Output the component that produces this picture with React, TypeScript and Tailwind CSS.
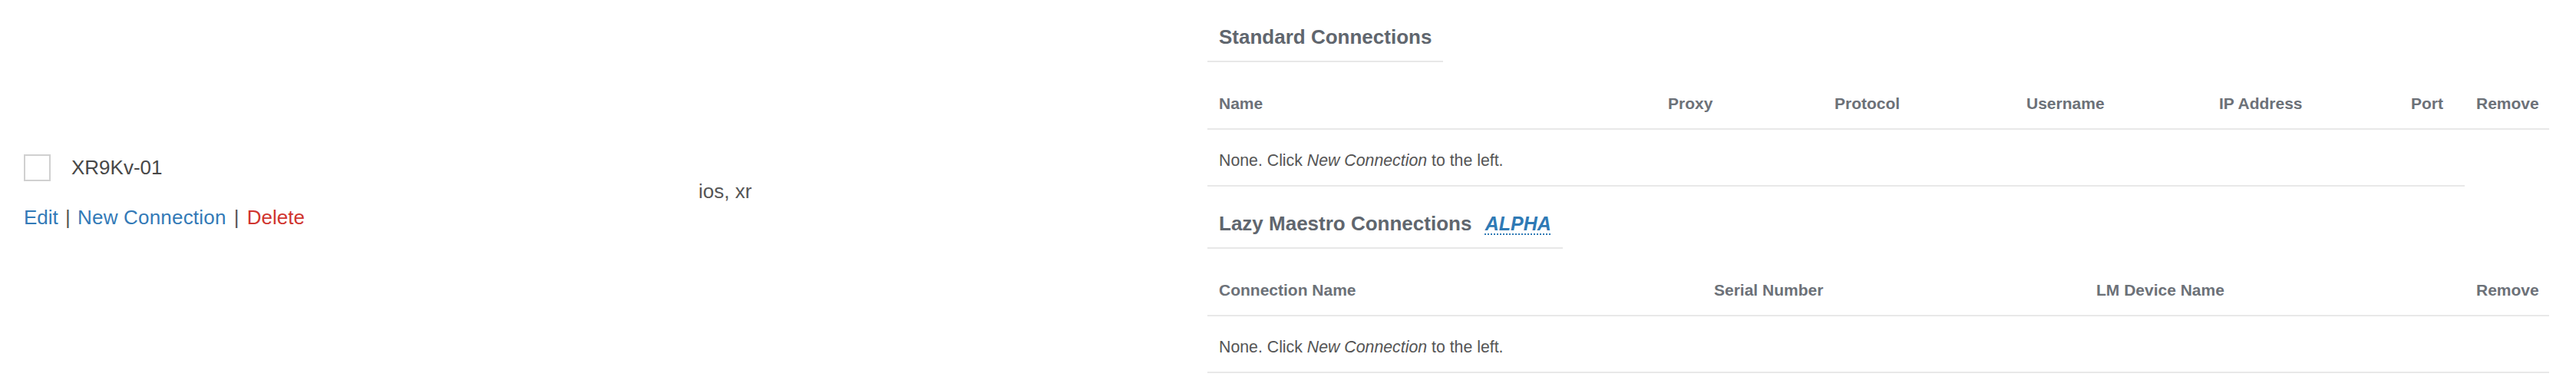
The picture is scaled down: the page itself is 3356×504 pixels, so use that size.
import React from 'react';

/** Column layout of the two connection tables (px widths of the original grid) */
const standardCols = ['Name', 'Proxy', 'Protocol', 'Username', 'IP Address', 'Port', 'Remove'];
const lazyCols = ['Connection Name', 'Serial Number', 'LM Device Name', 'Remove'];

const headCell =
  'px-[15px] pt-[20px] pb-[20px] text-[21px] leading-[24px] font-bold text-[#6c7178] border-b-2 border-[#e8e8e8] whitespace-nowrap';

function SectionHeading({ children }: { children: React.ReactNode }) {
  return (
    <div className="w-fit px-[15px] pt-[33px] pb-[16px] border-b-2 border-[#e8e8e8]">
      <h3 className="text-[26px] leading-[30px] font-bold text-[#60666e] whitespace-nowrap">{children}</h3>
    </div>
  );
}

function EmptyRow() {
  return (
    <>
      None. Click <em>New Connection</em> to the left.
    </>
  );
}

export default function App() {
  return (
    <div className="w-[3356px] bg-white font-['Liberation_Sans',Arial,sans-serif]">
      <div className="flex items-center">
        {/* Device name + actions */}
        <div className="w-[895px] pl-[31px] shrink-0">
          <div className="flex items-center h-[35px]">
            <span className="w-[35px] h-[35px] border-2 border-[#d0d0d0] bg-white shrink-0" />
            <span className="ml-[27px] text-[26px] leading-[30px] text-[#484848]">XR9Kv-01</span>
          </div>
          <div className="mt-[32px] text-[26px] leading-[30px] text-[#555] whitespace-nowrap">
            <a href="#" className="text-[#337ab7]">Edit</a>
            <span className="mx-[2px]"> | </span>
            <a href="#" className="text-[#337ab7] tracking-[0.2px]">New Connection</a>
            <span className="mx-[3px]"> | </span>
            <a href="#" className="text-[#d0352e]">Delete</a>
          </div>
        </div>

        {/* Tags */}
        <div className="w-[678px] pl-[15px] shrink-0 text-[26px] leading-[30px] text-[#555]">ios, xr</div>

        {/* Connections */}
        <div className="w-[1748px] shrink-0 pb-[12px]">
          <SectionHeading>Standard Connections</SectionHeading>
          <div className="mt-[22px] grid grid-cols-[585px_217px_250px_251px_250px_85px_110px]">
            {standardCols.map((c) => (
              <div key={c} className={headCell}>{c}</div>
            ))}
            <div className="col-span-6 px-[15px] pt-[28px] pb-[20px] text-[21.3px] leading-[24px] text-[#555] border-b-2 border-[#e8e8e8]">
              <EmptyRow />
            </div>
            <div />
          </div>

          <SectionHeading>
            Lazy Maestro Connections{' '}
            <abbr
              title="This feature is in alpha"
              className="ml-[10px] text-[25px] italic text-[#2f7ab5] underline decoration-dotted decoration-2 underline-offset-[4px]"
            >
              ALPHA
            </abbr>
          </SectionHeading>
          <div className="mt-[22px] grid grid-cols-[645px_498px_495px_110px]">
            {lazyCols.map((c) => (
              <div key={c} className={headCell}>{c}</div>
            ))}
            <div className="col-span-4 px-[15px] pt-[28px] pb-[20px] text-[21.3px] leading-[24px] text-[#555] border-b-2 border-[#e8e8e8]">
              <EmptyRow />
            </div>
          </div>
        </div>
      </div>
    </div>
  );
}
